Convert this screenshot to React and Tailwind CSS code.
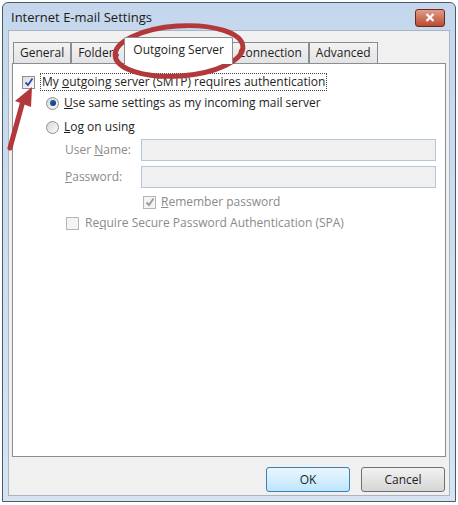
import React from "react";

const font = { fontFamily: '"Open Sans", "Noto Sans", sans-serif' };

function Tab({ label, selected }) {
  if (selected) {
    return (
      <div className="relative z-10 -mb-[1px] -mx-[2px] h-[27px] px-[8px] pt-[3px] bg-white border border-[#898c95] border-b-0 rounded-t-[2px] text-[12px] text-[#1e1e1e] leading-[18px]">
        {label}
      </div>
    );
  }
  return (
    <div className="h-[21px] mt-[5px] px-[6px] bg-gradient-to-b from-[#f3f3f3] to-[#e3e3e3] border border-[#898c95] border-b-0 text-[12px] text-[#1e1e1e] leading-[19px]">
      {label}
    </div>
  );
}

function Check({ checked, disabled }) {
  return (
    <div
      className={
        "w-[13px] h-[13px] border flex items-center justify-center " +
        (disabled ? "border-[#b5b5b5] bg-[#f4f4f4]" : "border-[#8e8f8f] bg-gradient-to-br from-[#dcdcdc] to-[#fbfbfb]")
      }
    >
      {checked && (
        <svg width="10" height="10" viewBox="0 0 10 10">
          <path d="M1.5 5.5 L4 8 L8.5 1.5" fill="none" stroke={disabled ? "#9a9a9a" : "#2a4bb5"} strokeWidth="1.8" />
        </svg>
      )}
    </div>
  );
}

function Radio({ checked }) {
  return (
    <div className="w-[13px] h-[13px] rounded-full border border-[#8e8f8f] bg-gradient-to-br from-[#d8d8d8] to-[#fafafa] flex items-center justify-center">
      {checked && <div className="w-[6px] h-[6px] rounded-full bg-gradient-to-br from-[#1a5fb4] to-[#0f3c7a]" />}
    </div>
  );
}

export default function App() {
  return (
    <div className="relative w-[458px] h-[505px] bg-white pt-[2px] px-[2px] pb-[3px]" style={font}>
      <div className="h-full border border-[#4a5a6a] rounded-t-[6px] bg-gradient-to-b from-[#c4d7ec] to-[#d6e4f2] flex flex-col">
        {/* title bar */}
        <div className="h-[27px] flex items-center justify-between pl-[8px] pr-[10px]">
          <span className="text-[13px] text-[#1a1a1a] mt-[3px]">Internet E-mail Settings</span>
          <div className="w-[30px] h-[18px] mt-[2px] rounded-[3px] border border-[#6b2a1e] bg-gradient-to-b from-[#e19b88] to-[#b94a2e] flex items-center justify-center">
            <svg width="10" height="9" viewBox="0 0 10 9">
              <path d="M1.5 1 L8.5 8 M8.5 1 L1.5 8" stroke="white" strokeWidth="2.2" />
            </svg>
          </div>
        </div>
        {/* client */}
        <div className="flex-1 mx-[5px] mb-[5px] bg-[#f0f0f0] border border-[#a9b5c2] flex flex-col px-[3px] pt-[6px]">
          <div className="flex items-end pl-[1px]">
            <Tab label="General" />
            <Tab label="Folders" />
            <Tab label="Outgoing Server" selected />
            <Tab label="Connection" />
            <Tab label="Advanced" />
          </div>
          <div className="h-[394px] bg-white border border-[#898c95] flex flex-col text-[12px] text-[#1e1e1e]">
            <div className="flex items-center mt-[9px] ml-[9px]">
              <Check checked />
              <span className="ml-[5px] px-[1px] border border-dotted border-[#444] leading-[16px]">
                My <u>o</u>utgoing server (SMTP) requires authentication
              </span>
            </div>
            <div className="flex items-center mt-[3px] ml-[33px]">
              <Radio checked />
              <span className="ml-[5px] leading-[18px]">
                <u>U</u>se same settings as my incoming mail server
              </span>
            </div>
            <div className="flex items-center mt-[6px] ml-[33px]">
              <Radio />
              <span className="ml-[5px] leading-[18px]">
                <u>L</u>og on using
              </span>
            </div>
            <div className="flex items-center mt-[3px] ml-[52px] mr-[9px]">
              <span className="w-[76px] text-[#8a8a8a]">
                User <u>N</u>ame:
              </span>
              <div className="flex-1 h-[22px] bg-[#f0f0f0] border border-[#b7c7da]" />
            </div>
            <div className="flex items-center mt-[5px] ml-[52px] mr-[9px]">
              <span className="w-[76px] text-[#8a8a8a]">
                <u>P</u>assword:
              </span>
              <div className="flex-1 h-[22px] bg-[#f0f0f0] border border-[#b7c7da]" />
            </div>
            <div className="flex items-center mt-[6px] ml-[130px]">
              <Check checked disabled />
              <span className="ml-[5px] text-[#8a8a8a] leading-[16px]">
                <u>R</u>emember password
              </span>
            </div>
            <div className="flex items-center mt-[5px] ml-[53px]">
              <Check disabled />
              <span className="ml-[6px] text-[#8a8a8a] leading-[16px]">
                Re<u>q</u>uire Secure Password Authentication (SPA)
              </span>
            </div>
          </div>
          <div className="flex justify-end gap-[11px] mt-[10px] pr-[1px]">
            <div className="w-[84px] h-[25px] rounded-[3px] border border-[#3c7fb1] bg-gradient-to-b from-[#eaf6fd] to-[#bee6fd] flex items-center justify-center text-[12px] text-[#1e1e1e]">
              OK
            </div>
            <div className="w-[84px] h-[25px] rounded-[3px] border border-[#707070] bg-gradient-to-b from-[#f2f2f2] to-[#d5d5d5] flex items-center justify-center text-[12px] text-[#1e1e1e]">
              Cancel
            </div>
          </div>
        </div>
      </div>
      {/* annotations */}
      <svg className="absolute left-0 top-0 pointer-events-none" width="458" height="505">
        <ellipse cx="179" cy="51" rx="64" ry="25" fill="none" stroke="#b2383b" strokeWidth="5" transform="rotate(-4 179 51)" />
        <path d="M10 148 L23 101" stroke="#b2383b" strokeWidth="5" strokeLinecap="round" />
        <path d="M15 101 L32 87 L31 107 Z" fill="#b2383b" />
      </svg>
    </div>
  );
}
